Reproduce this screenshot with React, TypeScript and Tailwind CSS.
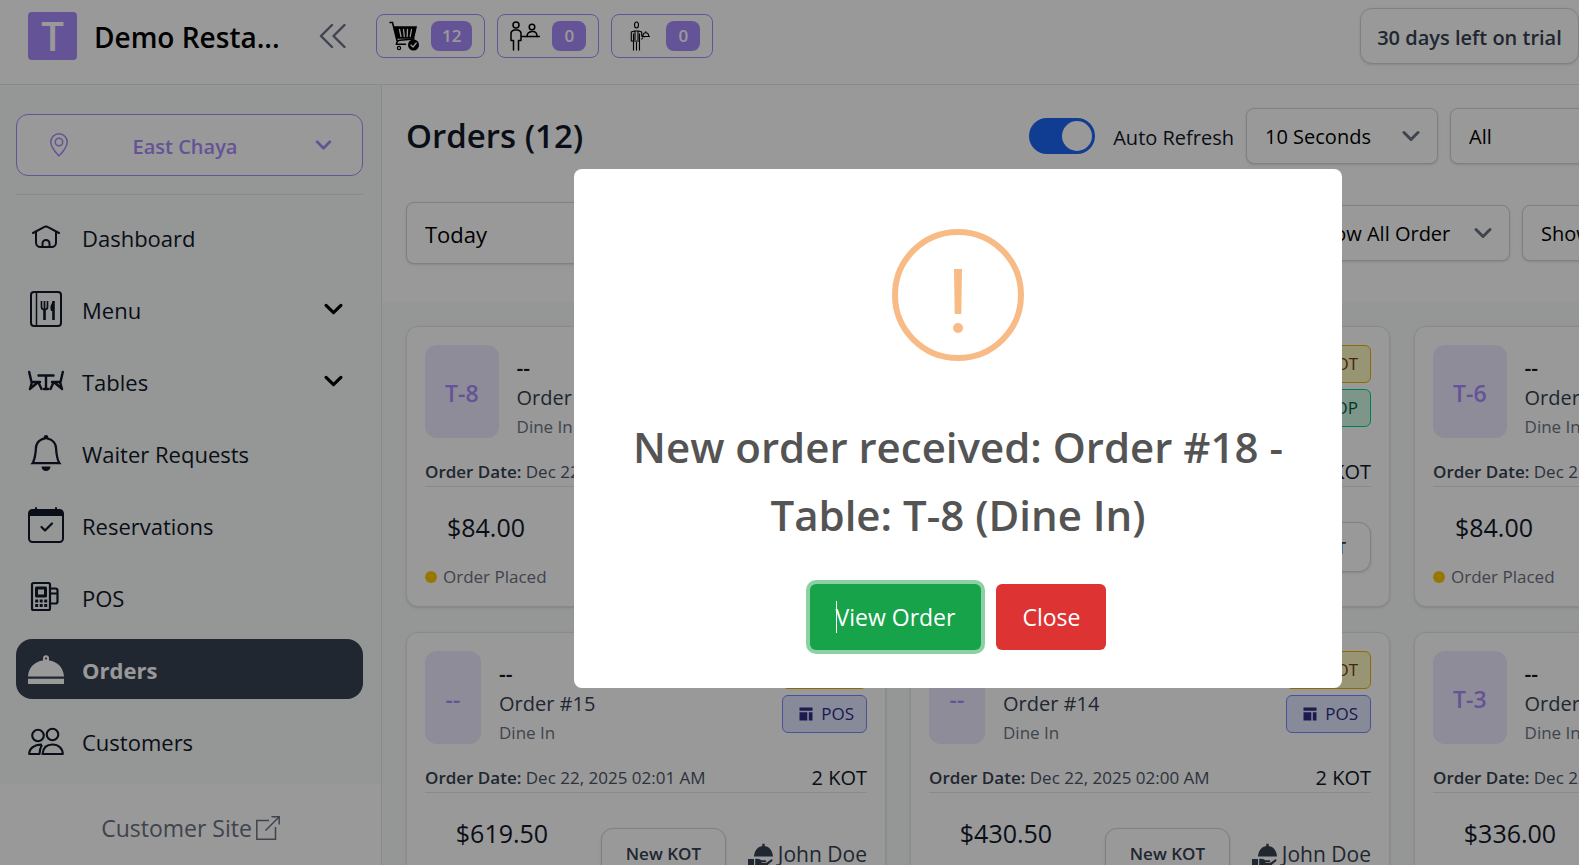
import type { ReactNode } from 'react';
import { BsBell, BsClock, BsGeoAlt, BsShop } from 'react-icons/bs';

type Badge = 'KOT' | 'SHOP' | 'POS';

type Order = {
  number: number;
  table: string;
  date: string;
  kots: number;
  total: string;
  status: string;
  source: Badge;
  waiter?: string;
};

const ORDERS: Order[] = [
  { number: 18, table: 'T-8', date: 'Dec 22, 2025 02:06 AM', kots: 1, total: '$84.00', status: 'Order Placed', source: 'SHOP' },
  { number: 17, table: 'T-8', date: 'Dec 22, 2025 02:05 AM', kots: 1, total: '$84.00', status: 'Order Placed', source: 'SHOP' },
  { number: 16, table: 'T-6', date: 'Dec 22, 2025 02:04 AM', kots: 1, total: '$84.00', status: 'Order Placed', source: 'SHOP' },
  { number: 15, table: '--', date: 'Dec 22, 2025 02:01 AM', kots: 2, total: '$619.50', status: 'Order Confirmed', source: 'POS', waiter: 'John Doe' },
  { number: 14, table: '--', date: 'Dec 22, 2025 02:00 AM', kots: 2, total: '$430.50', status: 'Order Confirmed', source: 'POS', waiter: 'John Doe' },
  { number: 13, table: 'T-3', date: 'Dec 22, 2025 01:58 AM', kots: 1, total: '$336.00', status: 'Order Confirmed', source: 'POS', waiter: 'John Doe' },
];

function Chevron({ className }: { className: string }) {
  return (
    <svg viewBox="0 0 18 11" className={className} fill="none" stroke="currentColor" strokeLinecap="round" strokeLinejoin="round" aria-hidden="true">
      <path d="M2 2l7 7 7-7" />
    </svg>
  );
}

function HomeIcon() {
  return (
    <svg viewBox="0 0 36 36" className="size-9" fill="none" stroke="currentColor" strokeWidth="2" strokeLinecap="round" strokeLinejoin="round" aria-hidden="true">
      <path d="M5 14L15.500 8.300a5 5 0 0 1 5 0L31 14" />
      <path d="M8 13v10.500a4.500 4.500 0 0 0 4.500 4.500h11a4.500 4.500 0 0 0 4.500-4.500V13" />
      <path d="M14.500 28v-3.500a3.500 3.500 0 0 1 7 0V28" />
    </svg>
  );
}

function MenuIcon() {
  return (
    <svg viewBox="0 0 36 36" className="size-9" fill="none" stroke="currentColor" strokeWidth="2" aria-hidden="true">
      <rect x="3" y="1" width="30" height="34" rx="3" />
      <path d="M8.500 1v34" strokeWidth="1.500" />
      <path d="M16.500 18v11M25.500 10v19" strokeWidth="2.600" />
      <path d="M13.500 10v6q0 2.500 3 2.500t3-2.500v-6M16.500 10v8" strokeWidth="1.700" />
      <path d="M26 10c-4 3-4 7-3 10h3z" fill="currentColor" stroke="none" />
    </svg>
  );
}

function TablesIcon() {
  return (
    <svg viewBox="0 0 36 36" className="size-9" fill="none" stroke="currentColor" strokeWidth="2.400" strokeLinecap="round" strokeLinejoin="round" aria-hidden="true">
      <path d="M10.500 12.500h15M18 12.500V26M16 26h4" />
      <path d="M1.200 9l2.300 10H12M4 19l-2 7M10.500 19.500l3 6.500M3 25l6-5" />
      <path d="M34.800 9l-2.300 10H24M32 19l2 7M25.500 19.500l-3 6.500M33 25l-6-5" />
    </svg>
  );
}

function CalendarIcon() {
  return (
    <svg viewBox="0 0 36 36" className="size-9" fill="none" stroke="currentColor" strokeWidth="2" strokeLinecap="round" strokeLinejoin="round" aria-hidden="true">
      <rect x="1" y="3" width="34" height="32" rx="3.500" />
      <path d="M1 9V6.500a3.500 3.500 0 0 1 3.500-3.500h27a3.500 3.500 0 0 1 3.500 3.500V9z" fill="currentColor" stroke="none" />
      <path d="M8 1v3M28 1v3" />
      <path d="M13.500 20l3.500 3.500 7-7" strokeWidth="2.200" />
    </svg>
  );
}

function PosIcon() {
  return (
    <svg viewBox="0 0 36 36" className="size-9" fill="none" stroke="currentColor" strokeWidth="2.200" strokeLinejoin="round" aria-hidden="true">
      <rect x="4" y="4" width="18" height="27" rx="1.500" />
      <rect x="8.500" y="9" width="9" height="8" strokeWidth="3" />
      <path d="M7.200 22h12M7.200 26.500h12" strokeWidth="3" strokeDasharray="3 1.500" />
      <path d="M22 9.500h5.500a2 2 0 0 1 2 2v11a2 2 0 0 1-2 2H22M22 14.500h7.500" />
    </svg>
  );
}

function ClocheIcon() {
  return (
    <svg viewBox="0 0 36 36" className="size-9" fill="currentColor" aria-hidden="true">
      <path d="M0 25.500C.5 17 6.500 10.500 15 9.600V7.200a3 3 0 0 1 6 0v2.400c8.500.9 14.500 7.400 15 15.900zM0 27.800h36V33H0z" />
      <circle cx="18" cy="7.500" r="1.100" fill="#374151" />
    </svg>
  );
}

function CustomersIcon() {
  return (
    <svg viewBox="0 0 36 36" className="size-9" fill="none" stroke="currentColor" strokeWidth="2.100" strokeLinejoin="round" aria-hidden="true">
      <circle cx="10" cy="12.500" r="5.800" />
      <circle cx="24.500" cy="11.500" r="5.800" />
      <path d="M14 21.700C6.500 21.200 1.200 25.500 1.200 31h10.300q0-5 2.500-9.300M14.500 31h20.300c0-5.500-4.300-9.500-10.300-9.500S15 25 14.500 31z" />
    </svg>
  );
}

function CartIcon() {
  return (
    <svg viewBox="0 0 30 30" className="size-[30px]" fill="none" stroke="currentColor" strokeWidth="1.600" strokeLinecap="round" aria-hidden="true">
      <path d="M1 1.500h2.500L8 19.500M25 18l-14 1.200q-3.500.5-3.500 4h9" />
      <path d="M5.500 6H27l-2.500 11H8.500z" fill="currentColor" />
      <path d="M10.500 8.500l1.500 7M14.500 8.500l.8 7M18.500 8.500l-.3 7M22.500 8.500l-1.300 7" stroke="#fff" strokeWidth="1.300" />
      <circle cx="10" cy="27" r="1.600" strokeWidth="1.200" />
      <circle cx="24.500" cy="24" r="5.500" fill="currentColor" stroke="none" />
      <path d="M22 24l2 2 3.200-4" stroke="#fff" strokeWidth="1.300" />
    </svg>
  );
}

function WaiterTableIcon() {
  return (
    <svg viewBox="0 0 30 30" className="size-[30px]" fill="none" stroke="currentColor" strokeWidth="1.500" strokeLinecap="round" strokeLinejoin="round" aria-hidden="true">
      <circle cx="6" cy="4" r="3" />
      <path d="M3.500 29V19.500H1v-7q0-2.500 3-3.500h4q3 1 3 3.500v3h18.500M11 15.500v4H8.500V29" />
      <circle cx="22" cy="6" r="2.800" />
      <path d="M17 15.500q0-4.500 5-5t5 5" />
    </svg>
  );
}

function WaiterIcon() {
  return (
    <svg viewBox="0 0 30 30" className="size-[30px]" fill="none" stroke="currentColor" strokeWidth="1.100" strokeLinejoin="round" aria-hidden="true">
      <ellipse cx="12.500" cy="4" rx="2" ry="3" />
      <path d="M9.500 29.500V20H7.300v-9l3-1h4.400l3 1v3.500l3 1.500M15.500 19v10.500M12.500 21v8.500M9.500 12.500V20h6v-7.500M11 10v9M14 10v9" />
      <path d="M17.500 15.500h8.500M18.800 15.500q.3-3.700 3-3.700t3 3.700M21.800 10.300v1.500M19 16.500l-1.500 2" />
    </svg>
  );
}

function ServedByIcon() {
  return (
    <svg viewBox="0 0 26 24" className="h-6 w-[26px]" fill="currentColor" aria-hidden="true">
      <path d="M6 13.500C6.300 7.600 9.800 3.700 14.300 3V.8h2.400V3C21.200 3.700 24.700 7.600 25 13.500zM0 16h6v7H0zM7.200 16c3-1 5 .2 6 1.300h4.300c1 .2 1 1.700 0 1.800h-4v.6h5l4.500-3.300c1.200-.4 2 .7 1.300 1.600L19.500 22q-1 1-2.500 1H7.200z" />
    </svg>
  );
}

function PosBadgeIcon() {
  return (
    <svg viewBox="0 0 14 14" className="size-[14px]" fill="currentColor" aria-hidden="true">
      <path d="M.5.500h13v3.200H.5zM.5 5.200h7.800V13.500H.5zM9.800 5.200h3.700v8.300H9.800z" />
    </svg>
  );
}

function ExternalIcon() {
  return (
    <svg viewBox="0 0 24 24" className="size-6" fill="none" stroke="currentColor" strokeWidth="1.500" aria-hidden="true">
      <path d="M13 4.500H.8v18.700h18.700V11M9.500 14.500L23 1M15.500.8h7.700v7.700" />
    </svg>
  );
}

function CountPill({ label, count, children }: { label: string; count: number; children: ReactNode }) {
  return (
    <button type="button" aria-label={label} className="flex h-11 items-center gap-3 rounded-lg border border-[#a78bfa] px-3 text-black">
      {children}
      <span className="min-w-[34px] rounded-lg bg-[#a78bfa] px-[11px] text-center text-[17px] leading-[30px] font-semibold text-white">{count}</span>
    </button>
  );
}

function Select({ label, value, className }: { label: string; value: string; className: string }) {
  return (
    <div className={`relative ${className}`}>
      <select
        aria-label={label}
        className="h-full w-full appearance-none rounded-lg border border-gray-300 bg-white pt-0.5 pr-12 pl-[18px] text-black shadow-sm"
      >
        <option>{value}</option>
      </select>
      <Chevron className="pointer-events-none absolute top-1/2 right-[18px] h-[11px] w-[18px] -translate-y-1/2 text-gray-500 stroke-3" />
    </div>
  );
}

function NavItem({ label, icon, expandable, active }: { label: string; icon: ReactNode; expandable?: boolean; active?: boolean }) {
  return (
    <li>
      <a
        href="#"
        aria-current={active ? 'page' : undefined}
        className={`flex h-[60px] items-center gap-[18px] rounded-2xl pr-5 pl-3 text-[22px] ${
          active ? 'bg-gray-700 font-bold text-white' : 'text-gray-900'
        }`}
      >
        {icon}
        <span className="flex-1 pt-0.5">{label}</span>
        {expandable && <Chevron className="h-[12px] w-[19px] stroke-3 text-black" />}
      </a>
    </li>
  );
}

function Sidebar() {
  return (
    <aside className="flex w-[382px] shrink-0 flex-col border-r border-gray-200 bg-white">
      <div className="bg-gray-50 pt-[29px] pr-[18px] pb-[13px] pl-4">
        <button
          type="button"
          className="flex h-[62px] w-full items-center rounded-xl border border-[#a78bfa] bg-white px-[30px] text-[20px] font-semibold text-[#a78bfa]"
        >
          <BsGeoAlt className="size-6" />
          <span className="flex-1 pt-1 pr-4">East Chaya</span>
          <Chevron className="h-[10px] w-[17px] stroke-3" />
        </button>
        <nav aria-label="Main" className="mt-[18px] border-t border-gray-200 pt-3">
          <ul className="flex flex-col gap-3">
            <NavItem label="Dashboard" icon={<HomeIcon />} />
            <NavItem label="Menu" icon={<MenuIcon />} expandable />
            <NavItem label="Tables" icon={<TablesIcon />} expandable />
            <NavItem label="Waiter Requests" icon={<BsBell className="size-9" />} />
            <NavItem label="Reservations" icon={<CalendarIcon />} />
            <NavItem label="POS" icon={<PosIcon />} />
            <NavItem label="Orders" icon={<ClocheIcon />} active />
            <NavItem label="Customers" icon={<CustomersIcon />} />
          </ul>
        </nav>
      </div>
      <a href="#" className="mt-[27px] flex items-center justify-center gap-1 text-[23px] text-gray-500">
        Customer Site
        <ExternalIcon />
      </a>
    </aside>
  );
}

function OrderBadge({ kind }: { kind: Badge }) {
  const tone = {
    KOT: 'border-yellow-500 bg-yellow-100 text-yellow-900',
    SHOP: 'border-emerald-400 bg-emerald-100 text-emerald-800',
    POS: 'border-indigo-400 bg-indigo-100 text-indigo-900',
  }[kind];

  return (
    <span className={`flex h-[38px] min-w-[85px] items-center justify-end gap-2 rounded-md border px-3 text-[17px] ${tone}`}>
      {kind === 'KOT' && <BsClock className="size-[14px]" />}
      {kind === 'SHOP' && <BsShop className="size-[14px]" />}
      {kind === 'POS' && <PosBadgeIcon />}
      {kind}
    </span>
  );
}

function OrderCard({ order }: { order: Order }) {
  return (
    <article className="rounded-xl border border-gray-200 bg-white px-[18px] pt-[18px] pb-[15px] shadow-sm">
      <div className="flex h-[94px] items-start gap-[18px]">
        <div className="flex h-[93px] min-w-14 items-center justify-center rounded-xl bg-[#ede9fe] px-5 pt-1 text-[23px] font-semibold text-[#a78bfa]">
          {order.table}
        </div>
        <div className="flex-1 pt-2">
          <p className="text-[21px] leading-[30px] font-semibold text-gray-900">--</p>
          <p className="text-[20px] leading-[30px] text-gray-700">Order #{order.number}</p>
          <p className="text-[17px] leading-7 text-gray-500">Dine In</p>
        </div>
        <div className="flex flex-col items-end gap-[6px]">
          <OrderBadge kind="KOT" />
          <OrderBadge kind={order.source} />
        </div>
      </div>

      <div className="mt-[18px] flex h-[30px] items-center justify-between border-b border-gray-200">
        <p className="text-[17px] text-gray-600">
          <span className="font-semibold text-gray-700">Order Date:</span> {order.date}
        </p>
        <p className="text-[20px] text-gray-900">{order.kots} KOT</p>
      </div>

      <div className="flex items-start justify-between pt-[22px]">
        <div className={order.waiter ? 'w-[154px] text-center' : 'w-[122px] text-center'}>
          <p className="text-[25px] leading-9 text-gray-900">{order.total}</p>
          <p className="mt-[18px] flex items-center gap-[6px] text-[17px] leading-7 whitespace-nowrap text-gray-500">
            <span className="size-3 shrink-0 rounded-full bg-yellow-400" />
            {order.status}
          </p>
        </div>
        <button
          type="button"
          className="mt-[13px] h-[50px] w-[125px] rounded-xl border border-gray-300 bg-white pt-0.5 text-[17px] font-semibold text-gray-700 shadow-sm"
        >
          New KOT
        </button>
        {order.waiter && (
          <p className="mt-[13px] flex h-[50px] items-center gap-1 pt-1 text-[21px] text-gray-700">
            <ServedByIcon />
            {order.waiter}
          </p>
        )}
      </div>
    </article>
  );
}

function NewOrderDialog() {
  return (
    <div className="absolute inset-0 flex items-center justify-center bg-black/40 pr-0.5 pb-[9px]">
      <div role="alertdialog" aria-labelledby="dialog-title" className="flex w-[768px] flex-col items-center rounded-lg bg-white pt-[60px] pb-[38px]">
        <svg viewBox="0 0 132 132" className="size-[132px]" fill="none" stroke="#f8bb86" aria-hidden="true">
          <circle cx="66" cy="66" r="63" strokeWidth="6" />
          <path d="M62 40h8l-.7 45h-6.600z" fill="#f8bb86" stroke="none" />
          <circle cx="66" cy="99" r="5" fill="#f8bb86" stroke="none" />
        </svg>
        <h2 id="dialog-title" className="mt-[52px] text-center text-[42px] leading-[68px] font-semibold text-[#545454]">
          New order received: Order #18 -<br />
          Table: T-8 (Dine In)
        </h2>
        <div className="mt-[35px] flex gap-[15px]">
          <button type="button" className="relative h-[66px] rounded-md bg-[#16a34a] px-[26px] pt-0.5 text-[23px] text-white ring-4 ring-[#8bd1a4]">
            <span className="absolute top-[17px] left-[26px] h-8 w-px bg-white" />
            View Order
          </button>
          <button type="button" className="h-[66px] rounded-md bg-[#dd3333] px-[26px] pt-0.5 text-[23px] text-white">
            Close
          </button>
        </div>
      </div>
    </div>
  );
}

export default function App() {
  return (
    <div className="h-screen overflow-hidden bg-gray-50 font-['Open_Sans','Noto_Sans',sans-serif]">
      <div className="relative flex h-full min-w-[1918px] flex-col overflow-hidden">
        <header className="flex h-[85px] shrink-0 items-start border-b border-gray-200 bg-white">
          <a href="#" className="ml-7 flex h-[72px] w-[290px] items-center gap-[17px] text-[28px] font-semibold text-black">
            <span className="flex h-12 w-[49px] items-center justify-center rounded bg-[#a78bfa] text-[40px] text-white">T</span>
            <span className="pt-0.5">Demo Resta...</span>
          </a>
          <button type="button" aria-label="Collapse sidebar" className="flex h-[72px] w-[58px] items-center text-gray-500">
            <svg viewBox="0 0 28 26" className="h-[26px] w-7" fill="none" stroke="currentColor" strokeWidth="2.400" strokeLinecap="round" strokeLinejoin="round" aria-hidden="true">
              <path d="M14 2L3 13l11 11M26.500 2l-11 11 11 11" />
            </svg>
          </button>
          <div className="flex h-[72px] items-center gap-3">
            <CountPill label="New orders" count={12}>
              <CartIcon />
            </CountPill>
            <CountPill label="Waiter requests" count={0}>
              <WaiterTableIcon />
            </CountPill>
            <CountPill label="Deliveries" count={0}>
              <WaiterIcon />
            </CountPill>
          </div>
          <button
            type="button"
            className="mt-2 mr-[339px] ml-auto h-14 w-[219px] rounded-xl border border-gray-300 bg-white pt-1 text-[20px] font-semibold whitespace-nowrap text-gray-700 shadow-sm"
          >
            30 days left on trial
          </button>
        </header>

        <div className="flex flex-1">
          <Sidebar />
          <main className="min-w-0 flex-1">
            <section aria-label="Filters" className="bg-white px-6 pt-[23px] pb-[38px]">
              <div className="flex h-14 items-center">
                <h1 className="flex-1 text-[33px] leading-[52px] font-semibold text-gray-900">Orders (12)</h1>
                <label className="mr-3 flex items-center gap-[18px] text-[20px] text-gray-900">
                  <input
                    type="checkbox"
                    defaultChecked
                    className="flex h-9 w-[66px] appearance-none items-center justify-end rounded-full bg-[#1c64f2] px-[3px] before:size-[30px] before:rounded-full before:bg-white"
                  />
                  <span className="pt-1">Auto Refresh</span>
                </label>
                <Select label="Refresh interval" value="10 Seconds" className="mr-3 h-14 w-48 text-[20px]" />
                <Select label="Order status" value="All" className="h-14 w-[444px] text-[20px]" />
              </div>
              <div className="mt-[38px] flex h-[62px] items-center gap-3">
                <Select label="Date range" value="Today" className="h-full w-60 text-[22px]" />
                <Select label="Order type" value="Show All Order" className="ml-auto h-14 w-[218px] text-[20px]" />
                <Select label="Order source" value="Show All" className="h-14 w-[372px] text-[20px]" />
              </div>
            </section>
            <section aria-label="Orders" className="grid grid-cols-3 gap-x-6 gap-y-[25px] px-6 pt-6">
              {ORDERS.map((order) => (
                <OrderCard key={order.number} order={order} />
              ))}
            </section>
          </main>
        </div>

        <NewOrderDialog />
      </div>
    </div>
  );
}
